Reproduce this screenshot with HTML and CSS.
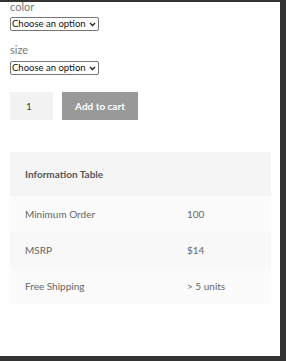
FILE: index.html
```html
<!DOCTYPE html>
<html lang="en">
<head>
    <meta charset="UTF-8">
    <meta name="viewport" content="width=device-width, initial-scale=1.0">
    <title>Product</title>
    <link rel="stylesheet" href="styles.css">
</head>
<body>
    <div class="page">
        <form class="variations">
            <div class="field first">
                <label for="color">color</label>
                <select id="color">
                    <option>Choose an option</option>
                </select>
            </div>
            <div class="field">
                <label for="size">size</label>
                <select id="size">
                    <option>Choose an option</option>
                </select>
            </div>
            <div class="cart">
                <input type="number" class="qty" value="1" min="1">
                <button type="button" class="add-btn">Add to cart</button>
            </div>
        </form>
        <table class="info-table">
            <thead>
                <tr><th colspan="2">Information Table</th></tr>
            </thead>
            <tbody>
                <tr><td>Minimum Order</td><td>100</td></tr>
                <tr class="alt"><td>MSRP</td><td>$14</td></tr>
                <tr><td>Free Shipping</td><td>&gt; 5 units</td></tr>
            </tbody>
        </table>
    </div>
</body>
</html>
```

FILE: styles.css
```css
body {
    margin: 0;
    padding: 2px 6px 5px 0;
    background-color: #333;
    font-family: Lato, 'Open Sans', sans-serif;
    color: #666;
}
.page {
    background-color: #fff;
    height: 354px;
    overflow: hidden;
    padding: 0 9px 0 10px;
}
.field {
    display: flex;
    flex-direction: column;
    align-items: flex-start;
    margin-bottom: 12px;
}
.field.first {
    margin-top: -2px;
}
.field label {
    font-size: 11px;
    line-height: 14px;
    color: #777;
    margin-bottom: 4px;
}
.field.first label {
    margin-bottom: 3px;
}
.field select {
    width: 89px;
    height: 14px;
    padding: 0 7px 0 1px;
    font-family: Lato, 'Open Sans', sans-serif;
    font-size: 9.5px;
    line-height: 12px;
    color: #111;
    border: 1px solid #767676;
    border-radius: 2px;
    appearance: none;
    -webkit-appearance: none;
    background: #fff url("data:image/svg+xml,%3Csvg xmlns='http://www.w3.org/2000/svg' width='7' height='5' viewBox='0 0 7 5'%3E%3Cpath d='M1 1l2.5 2.5L6 1' fill='none' stroke='%23222' stroke-width='1.3'/%3E%3C/svg%3E") no-repeat right 2px center;
}
.cart {
    display: flex;
    gap: 9px;
    margin-top: 17px;
}
.cart .qty {
    width: 43px;
    height: 28px;
    box-sizing: border-box;
    padding: 0 0 0 16px;
    border: none;
    background-color: #f2f2f2;
    font-family: Lato, 'Open Sans', sans-serif;
    font-size: 10px;
    color: #444;
    appearance: textfield;
    -moz-appearance: textfield;
}
.cart .qty::-webkit-inner-spin-button,
.cart .qty::-webkit-outer-spin-button {
    -webkit-appearance: none;
    margin: 0;
}
.add-btn {
    width: 76px;
    height: 28px;
    border: none;
    background-color: #999;
    color: #fff;
    font-family: Lato, 'Open Sans', sans-serif;
    font-weight: bold;
    font-size: 10px;
    cursor: pointer;
}
.info-table {
    margin-top: 32px;
    width: 261px;
    border-collapse: collapse;
    font-size: 10px;
}
.info-table th {
    height: 44px;
    padding: 0 15px;
    text-align: left;
    background-color: #f5f5f5;
    color: #555;
    font-weight: bold;
}
.info-table td {
    height: 36px;
    padding: 0 15px;
    background-color: #fbfbfb;
    color: #666;
}
.info-table td:first-child {
    width: 132px;
}
.info-table .alt td {
    background-color: #f8f8f8;
}
```
